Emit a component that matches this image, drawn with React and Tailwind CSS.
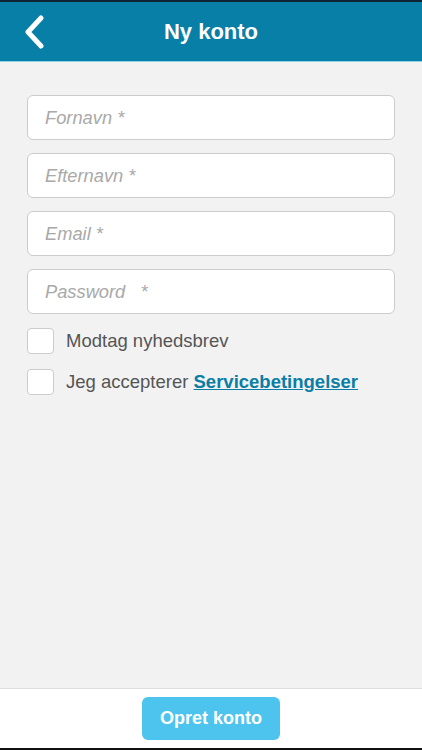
export default function App() {
  const fields = ['Fornavn *', 'Efternavn *', 'Email *', 'Password   *'];

  return (
    <div className="flex min-h-[750px] flex-col bg-[#f2f2f2] font-['Liberation_Sans',Arial,sans-serif]">
      <div className="h-[2px] bg-[#0b2533]" />
      <header className="relative flex h-[60px] items-center justify-center border-b border-[#8fd0e8] bg-[#077fa7]">
        <button className="absolute left-[22px] top-[13px] p-0">
          <svg width="26" height="34" viewBox="0 0 26 34" fill="none">
            <path d="M19 3 L6 17 L19 31" stroke="white" strokeWidth="5" strokeLinecap="round" strokeLinejoin="round" />
          </svg>
        </button>
        <h1 className="text-[22px] font-bold text-white">Ny konto</h1>
      </header>

      <main className="flex-1 px-[27px] pt-[33px]">
        <div className="flex flex-col gap-[13px]">
          {fields.map((f) => (
            <input
              key={f}
              type="text"
              placeholder={f}
              className="h-[45px] w-full rounded-[6px] border border-[#cccccc] bg-white px-[17px] text-[18.3px] italic text-[#444] outline-none placeholder:text-[#a9a9a9] whitespace-pre"
            />
          ))}
        </div>

        <label className="mt-[13px] flex items-center gap-[12px]">
          <span className="h-[26px] w-[27px] rounded-[4px] border border-[#cccccc] bg-white" />
          <span className="text-[18.5px] text-[#555]">Modtag nyhedsbrev</span>
        </label>
        <label className="mt-[13px] flex items-center gap-[12px]">
          <span className="h-[26px] w-[27px] rounded-[4px] border border-[#cccccc] bg-white" />
          <span className="text-[18.5px] text-[#555]">
            Jeg accepterer{' '}
            <a className="font-bold text-[#0b7ea5] underline">Servicebetingelser</a>
          </span>
        </label>
      </main>

      <footer className="flex h-[60px] items-center justify-center border-t border-[#dddddd] bg-white">
        <button className="h-[43px] w-[138px] rounded-[6px] bg-[#4cc4ee] text-[18px] font-bold text-white">
          Opret konto
        </button>
      </footer>
      <div className="h-[2px] bg-[#111]" />
    </div>
  );
}
